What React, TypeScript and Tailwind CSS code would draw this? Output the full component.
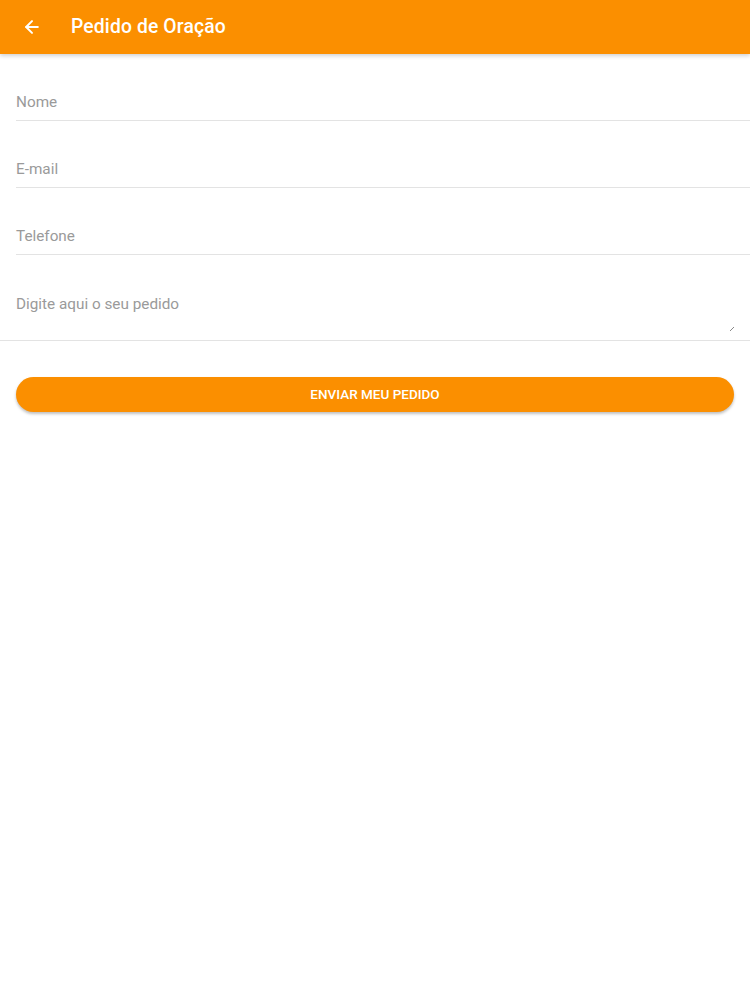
import { ArrowLeft } from "lucide-react";

const fields = ["Nome", "E-mail", "Telefone"];

export default function App() {
  return (
    <div className="min-h-[1000px] bg-white" style={{ fontFamily: "Roboto, 'Liberation Sans', sans-serif" }}>
      <header className="h-[54px] bg-[#fb8f00] flex items-center shadow-[0_2px_4px_rgba(0,0,0,0.18)] relative z-10">
        <ArrowLeft className="w-[20px] h-[20px] text-white ml-[22px]" strokeWidth={2.4} />
        <h1 className="ml-[29px] text-white text-[19.3px] font-medium tracking-[0.15px]">Pedido de Oração</h1>
      </header>

      <form className="flex flex-col">
        {fields.map((f) => (
          <div key={f} className="ml-[16px] h-[67px] flex items-end pb-[8px] border-b border-[#e3e3e3]">
            <span className="text-[15.3px] text-[#9a9a9a] leading-[20px]">{f}</span>
          </div>
        ))}
        <div className="relative h-[86px] border-b border-[#e3e3e3]">
          <span className="absolute left-[16px] top-[39px] text-[15.3px] text-[#9a9a9a] leading-[20px]">
            Digite aqui o seu pedido
          </span>
          <svg className="absolute right-[16px] bottom-[9px]" width="4" height="4" viewBox="0 0 4 4">
            <path d="M0 4 L4 0" stroke="#888" strokeWidth="1" />
          </svg>
        </div>

        <div className="px-[16px] mt-[36px]">
          <button
            type="button"
            className="w-full h-[35px] rounded-full bg-[#fb8f00] text-white text-[13.5px] font-medium shadow-[0_2px_3px_rgba(0,0,0,0.25)]"
          >
            ENVIAR MEU PEDIDO
          </button>
        </div>
      </form>
    </div>
  );
}
